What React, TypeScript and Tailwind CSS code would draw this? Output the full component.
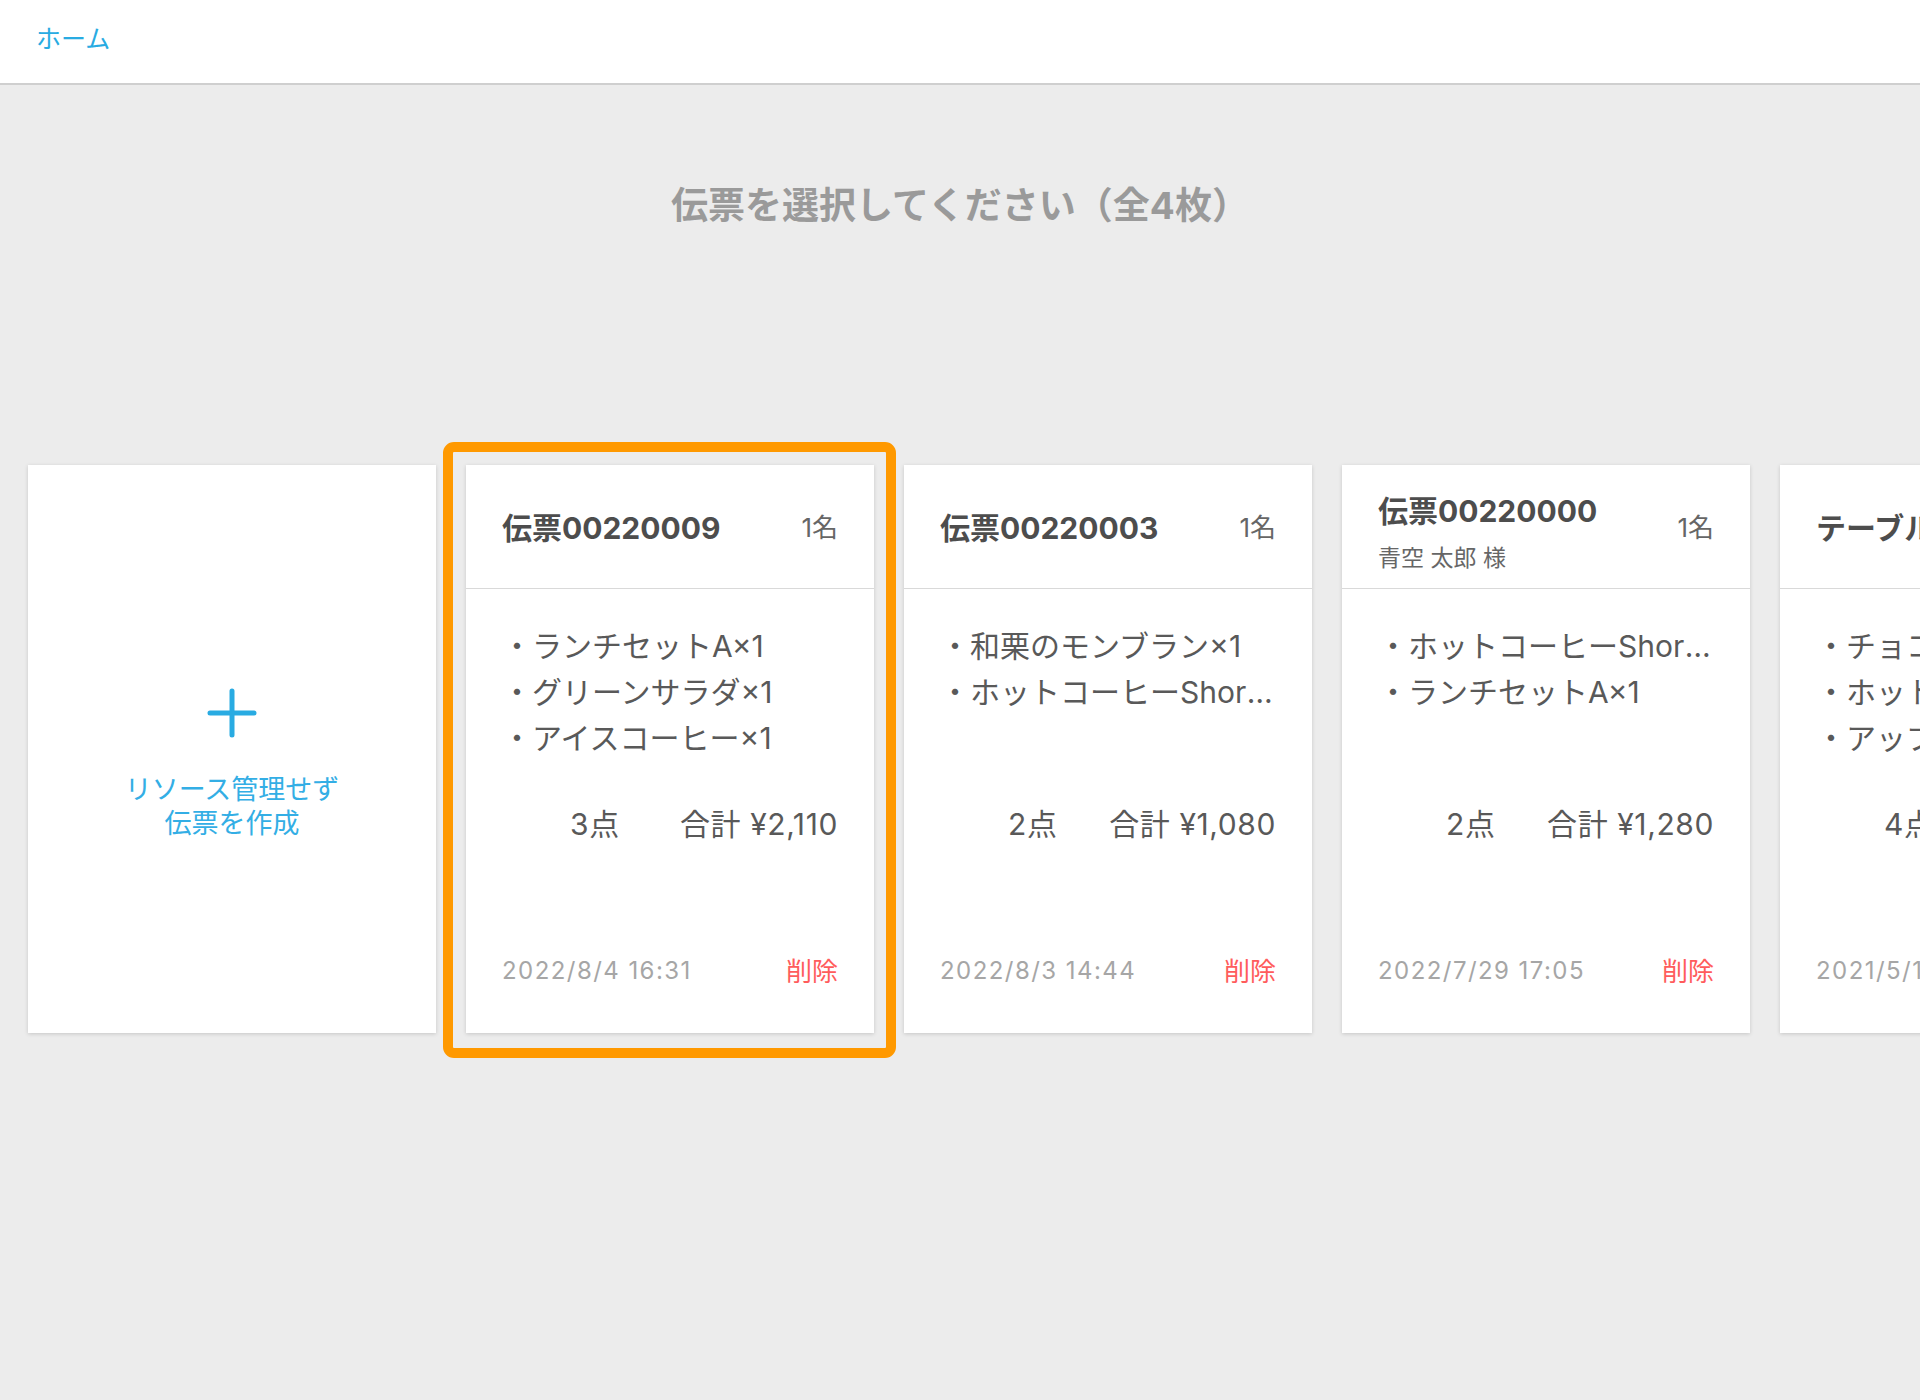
import React from "react";

type Slip = {
  title: string;
  sub?: string;
  people: string;
  items: string[];
  count: string;
  total: string;
  date: string;
  selected?: boolean;
};

const slips: Slip[] = [
  {
    title: "伝票00220009",
    people: "1名",
    items: ["・ランチセットA×1", "・グリーンサラダ×1", "・アイスコーヒー×1"],
    count: "3点",
    total: "合計 ¥2,110",
    date: "2022/8/4 16:31",
    selected: true,
  },
  {
    title: "伝票00220003",
    people: "1名",
    items: ["・和栗のモンブラン×1", "・ホットコーヒーShortサイズ×1"],
    count: "2点",
    total: "合計 ¥1,080",
    date: "2022/8/3 14:44",
  },
  {
    title: "伝票00220000",
    sub: "青空 太郎 様",
    people: "1名",
    items: ["・ホットコーヒーShortサイズ×1", "・ランチセットA×1"],
    count: "2点",
    total: "合計 ¥1,280",
    date: "2022/7/29 17:05",
  },
  {
    title: "テーブル05",
    people: "2名",
    items: ["・チョコレートケーキ×1", "・ホットコーヒーShortサイズ×2", "・アップルパイ×1"],
    count: "4点",
    total: "合計 ¥2,640",
    date: "2021/5/15 12:10",
  },
];

function SlipCard({ s }: { s: Slip }) {
  return (
    <div className="relative shrink-0 w-[408px] h-[568px] bg-white shadow-[0_1px_4px_rgba(0,0,0,0.16)] flex flex-col">
      <div className="h-[124px] shrink-0 border-b border-[#d9d9d9] px-[36px] flex items-center justify-between">
        {s.sub ? (
          <div className="flex flex-col mt-[12px]">
            <div className="text-[30px] leading-[36px] font-bold text-[#4d4d4d] whitespace-nowrap">{s.title}</div>
            <div className="text-[23px] leading-[28px] mt-[15px] text-[#666666] whitespace-nowrap">{s.sub}</div>
          </div>
        ) : (
          <div className="text-[30px] leading-[36px] font-bold text-[#4d4d4d] whitespace-nowrap mt-[2px]">{s.title}</div>
        )}
        <div className="text-[26px] leading-[32px] text-[#666666] whitespace-nowrap mt-[2px]">{s.people}</div>
      </div>
      <div className="flex-1 flex flex-col px-[36px] pt-[34px] pb-[45px] min-w-0">
        <div className="h-[138px] flex flex-col text-[30px] leading-[46px] text-[#595959] min-w-0">
          {s.items.map((it, i) => (
            <div key={i} className="truncate">
              {it}
            </div>
          ))}
        </div>
        <div className="mt-[43px] h-[40px] flex items-center text-[30px] tracking-[0.02em] text-[#595959] whitespace-nowrap">
          <span className="ml-[68px]">{s.count}</span>
          <span className="ml-auto">{s.total}</span>
        </div>
        <div className="mt-auto h-[34px] flex items-center justify-between text-[24px] whitespace-nowrap">
          <span className="text-[#a6a6a6] tracking-[0.06em]">{s.date}</span>
          <span className="text-[26px] text-[#ff5c5c]">削除</span>
        </div>
      </div>
      {s.selected && (
        <div className="absolute -top-[23px] -left-[23px] -right-[22px] -bottom-[25px] border-[10px] border-[#ff9900] rounded-[11px] pointer-events-none" />
      )}
    </div>
  );
}

export default function App() {
  return (
    <div className="w-full min-h-screen overflow-hidden bg-[#ececec] font-[family-name:Inter,'Noto_Sans_CJK_JP',sans-serif]">
      <header className="h-[85px] bg-white border-b-2 border-[#cfcfcf] flex items-center px-[36px] pb-[3px]">
        <span className="text-[25px] text-[#29abe2]">ホーム</span>
      </header>
      <h1 className="mt-[96px] text-center text-[37px] leading-[50px] font-bold text-[#9a9a9a]">
        伝票を選択してください（全4枚）
      </h1>
      <div className="mt-[234px] flex gap-[30px] pl-[28px]">
        <div className="shrink-0 w-[408px] h-[568px] bg-white shadow-[0_1px_4px_rgba(0,0,0,0.16)] flex flex-col items-center justify-center pt-[31px]">
          <svg width="50" height="50" viewBox="0 0 50 50" fill="none">
            <path d="M25 3V47M3 25H47" stroke="#29abe2" strokeWidth="5" strokeLinecap="round" />
          </svg>
          <div className="mt-[35px] text-center text-[27px] leading-[34px] text-[#33aee5]">
            <div>リソース管理せず</div>
            <div>伝票を作成</div>
          </div>
        </div>
        {slips.map((s, i) => (
          <SlipCard key={i} s={s} />
        ))}
      </div>
    </div>
  );
}
